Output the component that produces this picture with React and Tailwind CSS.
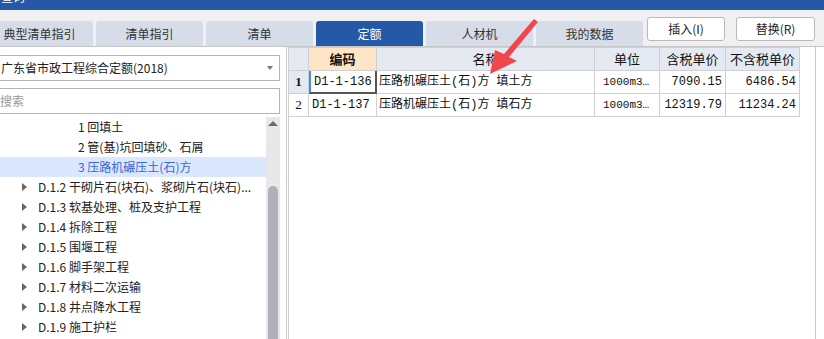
import React from "react";

const tabs = ["典型清单指引", "清单指引", "清单", "定额", "人材机", "我的数据"];

const subItems = ["1 回填土", "2 管(基)坑回填砂、石屑", "3 压路机碾压土(石)方"];

const chapters = [
  "D.1.2 干砌片石(块石)、浆砌片石(块石)...",
  "D.1.3 软基处理、桩及支护工程",
  "D.1.4 拆除工程",
  "D.1.5 围堰工程",
  "D.1.6 脚手架工程",
  "D.1.7 材料二次运输",
  "D.1.8 井点降水工程",
  "D.1.9 施工护栏",
];

const rows = [
  { no: "1", code: "D1-1-136", name: "压路机碾压土(石)方 填土方", unit: "1000m3…", tax: "7090.15", noTax: "6486.54" },
  { no: "2", code: "D1-1-137", name: "压路机碾压土(石)方 填石方", unit: "1000m3…", tax: "12319.79", noTax: "11234.24" },
];

const ui = { fontFamily: '"Noto Sans CJK SC", "Noto Sans", sans-serif' };
const grid = { fontFamily: '"Liberation Mono", "Noto Sans CJK SC", monospace' };

function Tab({ label, active }) {
  return (
    <div
      className={
        "w-[107px] h-[25px] flex items-center justify-center rounded-t-[3px] text-[12px] " +
        (active ? "bg-[#2459a7] text-white" : "bg-[#d6dce8] text-[#333]")
      }
    >
      {label}
    </div>
  );
}

function Scrollbar() {
  return (
    <div className="w-[14px] h-full bg-[#e8e8eb] flex flex-col items-center">
      <div className="mt-[4px] w-0 h-0 border-l-[5px] border-r-[5px] border-b-[5px] border-l-transparent border-r-transparent border-b-[#6b6b6b]" />
      <div className="mt-[60px] w-[10px] flex-1 bg-[#aeb1b6] rounded-t-[5px]" />
    </div>
  );
}

function Tree() {
  return (
    <div className="flex-1 flex min-h-0 mt-[3px]">
      <div className="w-[266px] text-[12px] text-[#222]">
        {subItems.map((s, i) => (
          <div
            key={s}
            className={
              "h-[20px] flex items-center pl-[78px] " +
              (i === 2 ? "bg-[#dbe7fc] text-[#3868d6]" : "")
            }
          >
            {s}
          </div>
        ))}
        {chapters.map((c) => (
          <div key={c} className="h-[20px] flex items-center">
            <div className="ml-[22px] w-0 h-0 border-t-[4px] border-b-[4px] border-l-[5px] border-t-transparent border-b-transparent border-l-[#666]" />
            <span className="ml-[11px] whitespace-nowrap">{c}</span>
          </div>
        ))}
      </div>
      <Scrollbar />
    </div>
  );
}

const cols = [
  { w: "w-[20px]" },
  { w: "w-[68px]" },
  { w: "w-[218px]" },
  { w: "w-[65px]" },
  { w: "w-[66px]" },
  { w: "w-[74px]" },
];

function Table() {
  return (
    <div className="ml-[1px] w-[512px] border-l border-t border-[#d0d0d0] text-[12px] text-[#111]" style={grid}>
      <div className="flex h-[23px]" style={ui}>
        <div className={cols[0].w + " bg-[#e4e9f2] border-r border-b border-[#d0d0d0]"} />
        <div className={cols[1].w + " bg-[#fde5c6] border-r border-b border-[#d0d0d0] flex items-center justify-center font-bold text-[13px]"}>编码</div>
        <div className={cols[2].w + " bg-[#e4e9f2] border-r border-b border-[#d0d0d0] flex items-center justify-center text-[13px]"}>名称</div>
        <div className={cols[3].w + " bg-[#e4e9f2] border-r border-b border-[#d0d0d0] flex items-center justify-center text-[13px]"}>单位</div>
        <div className={cols[4].w + " bg-[#e4e9f2] border-r border-b border-[#d0d0d0] flex items-center justify-center text-[13px]"}>含税单价</div>
        <div className={cols[5].w + " bg-[#e4e9f2] border-r border-b border-[#d0d0d0] flex items-center justify-center text-[13px]"}>不含税单价</div>
      </div>
      {rows.map((r, i) => (
        <div key={r.no} className="flex h-[23px]">
          <div
            className={
              cols[0].w +
              " border-r border-b border-[#d0d0d0] flex items-center justify-center text-[13px] " +
              (i === 0 ? "bg-[#e4e9f2] font-bold" : "bg-white")
            }
            style={{ fontFamily: '"Liberation Serif", serif' }}
          >
            {r.no}
          </div>
          <div
            className={
              cols[1].w +
              " flex items-center pl-[3px] " +
              (i === 0
                ? "border-l-2 border-l-[#3d8af7] border-b-2 border-b-[#555] border-r-2 border-r-[#555]"
                : "border-r border-b border-[#d0d0d0]")
            }
          >
            {r.code}
          </div>
          <div className={cols[2].w + " border-r border-b border-[#d0d0d0] flex items-center pl-[2px] whitespace-nowrap"}>{r.name}</div>
          <div className={cols[3].w + " border-r border-b border-[#d0d0d0] flex items-center pl-[8px] whitespace-nowrap text-[11px]"}>{r.unit}</div>
          <div className={cols[4].w + " border-r border-b border-[#d0d0d0] flex items-center justify-end pr-[3px]"}>{r.tax}</div>
          <div className={cols[5].w + " border-r border-b border-[#d0d0d0] flex items-center justify-end pr-[3px]"}>{r.noTax}</div>
        </div>
      ))}
    </div>
  );
}

function RedArrow() {
  return (
    <svg className="absolute left-0 top-0 pointer-events-none" width="824" height="339">
      <polygon
        points="534,19 538,22 509,57 517,61 490,74 495,50 504,54"
        fill="#f2464e"
      />
    </svg>
  );
}

export default function App() {
  return (
    <div className="relative w-[824px] h-[339px] overflow-hidden bg-white flex flex-col" style={ui}>
      <div className="h-[10px] bg-[#2559a6] overflow-hidden shrink-0">
        <div className="text-white text-[12px] leading-none mt-[-9px] ml-[1px]">查询</div>
      </div>
      <div className="h-[36px] bg-[#f0f0f0] flex shrink-0">
        <div className="flex gap-[3px] ml-[-14px] self-end">
          {tabs.map((t) => (
            <Tab key={t} label={t} active={t === "定额"} />
          ))}
        </div>
        <button className="ml-[4px] mt-[7px] w-[78px] h-[24px] bg-white border border-[#b9b9b9] rounded-[3px] text-[12px] text-[#222]">
          插入(I)
        </button>
        <button className="ml-[11px] mt-[7px] w-[79px] h-[24px] bg-white border border-[#b9b9b9] rounded-[3px] text-[12px] text-[#222]">
          替换(R)
        </button>
      </div>
      <div className="flex-1 flex border-t border-[#c6c6c6] min-h-0">
        <div className="w-[287px] border-r border-[#c9c9c9] flex flex-col pt-[8px]">
          <div className="ml-[-5px] w-[285px] h-[26px] border border-[#b4b4b4] flex items-center pl-[5px] text-[12px] text-[#222] shrink-0">
            <span className="flex-1">广东省市政工程综合定额(2018)</span>
            <div className="mr-[6px] w-0 h-0 border-l-[3px] border-r-[3px] border-t-[4px] border-l-transparent border-r-transparent border-t-[#777]" />
          </div>
          <div className="mt-[7px] ml-[-5px] w-[285px] h-[26px] border border-[#b4b4b4] flex items-center pl-[4px] text-[12px] text-[#999] shrink-0">
            搜索
          </div>
          <Tree />
        </div>
        <div className="flex-1 flex">
          <Table />
          <div className="ml-[15px] h-full border-r border-[#c9c9c9]" />
        </div>
      </div>
      <RedArrow />
    </div>
  );
}
